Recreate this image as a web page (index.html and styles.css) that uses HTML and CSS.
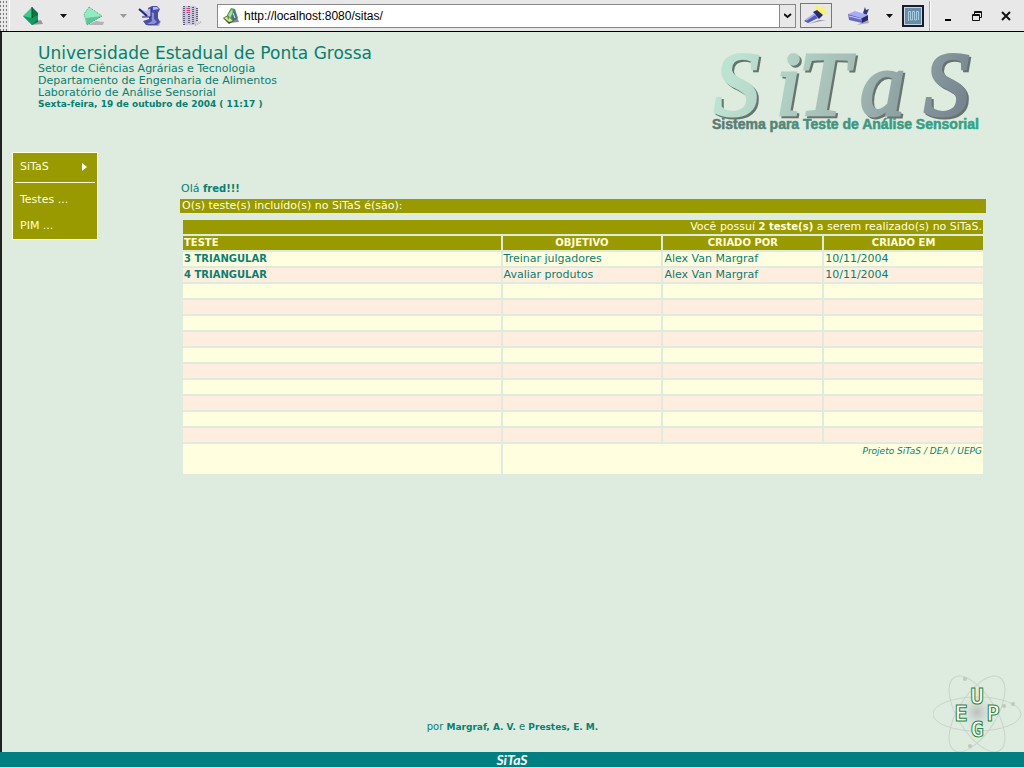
FILE: index.html
```html
<!DOCTYPE html>
<html lang="pt-BR">
<head>
<meta charset="utf-8">
<title>SiTaS</title>
<link rel="stylesheet" href="styles.css">
</head>
<body>
<nav class="toolbar" aria-label="Navegador">
  <span class="grip"></span>
  <button class="tool wide" aria-label="Voltar"><svg width="22" height="22" viewBox="0 0 22 22"><path d="M9 20l12-1-2-4-6 1z" fill="#999"/><path d="M1 11L10 2v18z" fill="#3fc88c"/><path d="M10 2l6 6v9l-6 3z" fill="#087744"/><path d="M1 11l9 2 6-3v4l-6 6z" fill="#129a5f"/><path d="M10 2v11" stroke="#054e2c"/></svg></button>
  <button class="tool caret" aria-label="Histórico anterior"><svg width="8" height="4"><path d="M0 0h7L3.500 4z" fill="#111"/></svg></button>
  <button class="tool forward" aria-label="Avançar"><svg width="22" height="22" viewBox="0 0 22 22"><path d="M5 20l15 0 1-3-8-1z" fill="#b4b4b4"/><path d="M6 2l13 9L4 20 1 9z" fill="#93ebc1"/><path d="M3 13l16-2L4 20z" fill="#5cc795"/><path d="M6 2l13 9L4 20 1 9z" fill="none" stroke="#4aa57b" stroke-dasharray="1 1"/></svg></button>
  <button class="tool caret" aria-label="Próximo histórico"><svg width="8" height="4"><path d="M0 0h7L3.500 4z" fill="#999"/></svg></button>
  <button class="tool reload" aria-label="Recarregar"><svg width="24" height="22" viewBox="0 0 24 22"><path d="M9 21h12l2-5-6-1z" fill="#aaa"/><path d="M10 3l4-2h5l3 3-2 4v5l2 4-3 3H8l-3-4 6-2V9z" fill="#4a4fa6"/><path d="M15 2h4l2 2-6 1z" fill="#b6b9f5"/><path d="M13 7l3 1v6l3 3-3 2H9l5-3z" fill="#8b90de"/><path d="M1 4l7 2 5-3v9H4l3-3z" fill="#b8baf2"/><path d="M1 4l8 7" stroke="#23276f" stroke-width="2"/><path d="M13 3v9H4" fill="none" stroke="#23276f" stroke-width="1"/></svg></button>
  <button class="tool wide" aria-label="Parar"><svg width="22" height="22" viewBox="0 0 22 22"><path d="M3 1h12l3 3v12l-4 4H5l-3-4V4z" fill="#cbc7d8"/><path d="M4 1v19M9 1v18M13 2v18M17 3v13" stroke="#5f5a79" stroke-width="2" stroke-dasharray="1 1"/><path d="M8 3v6" stroke="#db4181" stroke-width="3" stroke-dasharray="1 1"/><path d="M15 20l6-3" stroke="#aaa" stroke-width="2" stroke-dasharray="1 1"/></svg></button>
  <form class="address">
    <svg width="18" height="18" viewBox="0 0 18 18" aria-hidden="true"><path d="M6 16l11-1-2-5z" fill="#888"/><path d="M1 11l5-3 6 6-5 3z" fill="#314c3c"/><path d="M2 11l4-2 5 5-4 1z" fill="#d7eb79"/><path d="M5 8l4-7 4 1 3 9-5 3-3-4-2 3z" fill="#4b9349"/><path d="M6 8l4-6 1 3-3 6z" fill="#a6e18f"/><path d="M11 4l2 1 2 7-4 2-1-4z" fill="#4769a5"/><path d="M11 6l2 5" stroke="#eef3a5"/></svg>
    <input aria-label="Endereço" value="http://localhost:8080/sitas/">
    <button type="button" class="drop" aria-label="Abrir lista de endereços"><svg width="8" height="6"><path d="M0 1l3.500 3L7 1" fill="none" stroke="#111" stroke-width="2"/></svg></button>
  </form>
  <button class="go" aria-label="Ir"><svg width="28" height="22" viewBox="0 0 28 22"><path d="M14 1l5 3 5-2-2 4 4 3-5 2-8-4z" fill="#f7f36c"/><path d="M6 20l18-4-7 0z" fill="#9a9aab"/><path d="M2 17l10-7 4 4-10 5z" fill="#5659ba"/><path d="M11 8l4-2 6 5-4 4z" fill="#262a72"/><path d="M4 16l9-6" stroke="#aaaefa" stroke-width="2"/></svg></button>
  <button class="tool print" aria-label="Imprimir"><svg width="24" height="22" viewBox="0 0 24 22"><path d="M10 20l12-2-1-4z" fill="#aaa"/><path d="M9 8l1-4 9 2-2 6z" fill="#e8e8ff"/><path d="M16 8l2-6 1 3 3-1-3 7z" fill="#343a79"/><path d="M1 9l7-3 13 4-6 3z" fill="#a8acf0"/><path d="M1 9l14 4v5L2 15z" fill="#676bc5"/><path d="M15 13l6-3v5l-6 3z" fill="#272b70"/><path d="M2 11l12 3" stroke="#c8caff"/></svg></button>
  <button class="tool caret" aria-label="Opções de impressão"><svg width="8" height="4"><path d="M0 0h7L3.500 4z" fill="#111"/></svg></button>
  <button class="full" aria-label="Tela cheia"><svg width="16" height="16"><path d="M0 0h16v16H0z" fill="#688da9"/><path d="M3.500 13V3.500h2V12h2V3.500h2V12h2V3.500h2V12" fill="none" stroke="#a9cbe0"/></svg></button>
  <span class="divider"></span>
  <button class="tool window" aria-label="Minimizar"><svg width="12" height="12"><path d="M3 9h6v2H3z"/></svg></button>
  <button class="tool window" aria-label="Restaurar"><svg width="12" height="12"><path d="M3.500 4V1.500h7v6H8M3 2.500h8M1.500 4.500h7v6h-7zM1 5.500h8" fill="none" stroke="#111"/></svg></button>
  <button class="tool window" aria-label="Fechar"><svg width="12" height="12"><path d="M2 2l8 8M10 2l-8 8" stroke="#111" stroke-width="2"/></svg></button>
</nav>

<div class="page">
  <header class="header">
    <div class="identity">
      <h1>Universidade Estadual de Ponta Grossa</h1>
      <p>Setor de Ciências Agrárias e Tecnologia</p>
      <p>Departamento de Engenharia de Alimentos</p>
      <p>Laboratório de Análise Sensorial</p>
      <p class="date">Sexta-feira, 19 de outubro de 2004 ( 11:17 )</p>
    </div>
    <svg class="brand" width="280" height="90" viewBox="0 0 280 90" role="img" aria-label="SiTaS, Sistema para Teste de Análise Sensorial">
      <defs>
        <linearGradient id="metal" gradientUnits="userSpaceOnUse" x1="40" y1="0" x2="250" y2="80"><stop offset="0" stop-color="#bce2d1"/><stop offset="0.500" stop-color="#a4bbb5"/><stop offset="1" stop-color="#788590"/></linearGradient>
        <linearGradient id="caption" x1="0" x2="1" y1="0" y2="0"><stop offset="0" stop-color="#5d7770"/><stop offset="0.400" stop-color="#44917f"/><stop offset="1" stop-color="#2ea486"/></linearGradient>
      </defs>
      <text class="wordmark" x="10 72 95 156 220" y="68">SiTaS</text>
      <text class="tagline" x="8" y="82">Sistema para Teste de Análise Sensorial</text>
    </svg>
  </header>

  <div class="body">
    <nav class="menu" aria-label="Menu">
      <a href="#sitas">SiTaS <svg width="6" height="8"><path d="M0 0l5 4-5 4z" fill="#fff"/></svg></a>
      <hr>
      <a href="#testes">Testes ...</a>
      <a href="#pim">PIM ...</a>
    </nav>
    <main class="content">
      <p class="greeting">Olá <b>fred!!!</b></p>
      <h2>O(s) teste(s) incluído(s) no SiTaS é(são):</h2>
      <table>
        <colgroup><col class="test"><col><col><col></colgroup>
        <thead>
          <tr><td class="summary" colspan="4">Você possuí <b>2 teste(s)</b> a serem realizado(s) no SiTaS.</td></tr>
          <tr><th class="left">TESTE</th><th>OBJETIVO</th><th>CRIADO POR</th><th>CRIADO EM</th></tr>
        </thead>
        <tbody>
          <tr><td><b>3 TRIANGULAR</b></td><td>Treinar julgadores</td><td>Alex Van Margraf</td><td>10/11/2004</td></tr>
          <tr><td><b>4 TRIANGULAR</b></td><td>Avaliar produtos</td><td>Alex Van Margraf</td><td>10/11/2004</td></tr>
          <tr><td></td><td></td><td></td><td></td></tr>
          <tr><td></td><td></td><td></td><td></td></tr>
          <tr><td></td><td></td><td></td><td></td></tr>
          <tr><td></td><td></td><td></td><td></td></tr>
          <tr><td></td><td></td><td></td><td></td></tr>
          <tr><td></td><td></td><td></td><td></td></tr>
          <tr><td></td><td></td><td></td><td></td></tr>
          <tr><td></td><td></td><td></td><td></td></tr>
          <tr><td></td><td></td><td></td><td></td></tr>
          <tr><td></td><td></td><td></td><td></td></tr>
        </tbody>
        <tfoot><tr><td></td><td class="project" colspan="3">Projeto SiTaS / DEA / UEPG</td></tr></tfoot>
      </table>
    </main>
  </div>

  <div class="credits">
    <p>por <b>Margraf, A. V.</b> e <b>Prestes, E. M.</b></p>
    <svg class="atom" width="90" height="78" viewBox="0 0 90 78" role="img" aria-label="UEPG">
      <defs><radialGradient id="core"><stop offset="0" stop-color="#b9bfb9"/><stop offset="1" stop-color="#deebdf" stop-opacity="0"/></radialGradient></defs>
      <g fill="none" stroke="#c9d4ca">
        <ellipse cx="44" cy="40" rx="44" ry="17"/>
        <ellipse cx="44" cy="40" rx="43" ry="19" transform="rotate(58 44 40)"/>
        <ellipse cx="44" cy="40" rx="43" ry="19" transform="rotate(-58 44 40)"/>
      </g>
      <circle cx="44" cy="38" r="20" fill="url(#core)"/>
      <g fill="#bfc8c0"><circle cx="32" cy="5" r="2"/><circle cx="80" cy="30" r="2"/><circle cx="71" cy="32" r="2"/><circle cx="37" cy="72" r="2"/></g>
      <g class="letters"><text x="44" y="30">U</text><text x="28" y="47">E</text><text x="60" y="47">P</text><text x="44" y="63">G</text></g>
    </svg>
  </div>
</div>
<footer class="footer">SiTaS</footer>
</body>
</html>
```
FILE: styles.css
```css
* { box-sizing: border-box; }

body {
  margin: 0;
  min-height: 100vh;
  display: flex;
  flex-direction: column;
  background: #deebdf;
  color: #087f70;
  font: 11px/12px "DejaVu Sans", Verdana, sans-serif;
}

p, h1, h2 { margin: 0; font-weight: normal; }
b { font-size: 10px; }
button { padding: 0; font: inherit; }

.toolbar {
  display: flex;
  align-items: center;
  height: 32px;
  padding-right: 4px;
  background: #e8e8e8;
  border-bottom: 1px solid #000;
}
.tool {
  display: flex;
  align-items: center;
  justify-content: center;
  flex: none;
  height: 28px;
  border: 0;
  background: none;
}
.wide { width: 46px; }
.caret { width: 16px; }
.forward { width: 44px; }
.reload { width: 36px; }
.print { width: 46px; margin-left: 4px; }
.window { width: 29px; }
.grip {
  width: 10px;
  height: 31px;
  border-right: 1px solid #fff;
  background: radial-gradient(circle, #777 1px, transparent 1px) 2px 0 / 3px 4px;
}
.address {
  display: flex;
  align-items: center;
  flex: 1;
  min-width: 0;
  height: 24px;
  margin-left: 3px;
  padding-left: 4px;
  border: 1px solid #888;
  background: #fff;
}
.address input {
  flex: 1;
  min-width: 0;
  height: 20px;
  padding: 0 4px;
  border: 0;
  outline: 0;
  background: none;
  color: #000;
  font: 12px "Liberation Sans", Arial, sans-serif;
}
.drop {
  width: 16px;
  height: 22px;
  border: 0;
  border-left: 1px solid #888;
  background: #e8e8e8;
}
.go {
  width: 32px;
  height: 25px;
  margin-left: 4px;
  border: 1px solid #777;
  background: #e8e8e8;
}
.full {
  display: flex;
  align-items: center;
  justify-content: center;
  width: 22px;
  height: 22px;
  margin-left: 4px;
  border: 2px solid #171d2a;
  background: #cbd3dc;
}
.divider {
  width: 2px;
  height: 30px;
  margin: 0 2px 0 5px;
  border-left: 1px solid #aaa;
  background: #fff;
}

.page {
  flex: 1;
  display: flex;
  flex-direction: column;
  border-left: 2px solid #222;
}
.header {
  display: flex;
  justify-content: space-between;
  height: 102px;
  padding: 12px 40px 0 36px;
}
.header h1 { font-size: 17px; line-height: 19px; }
.header .date { font-size: 9px; font-weight: bold; line-height: 11px; }
.brand { flex: none; margin-top: 3px; }
.wordmark {
  fill: url(#metal);
  stroke: url(#metal);
  stroke-width: 3px;
  font: italic 90px "Liberation Serif", "Times New Roman", serif;
  filter: drop-shadow(2px 2px 0 #67736e);
}
.tagline {
  fill: url(#caption);
  stroke: url(#caption);
  stroke-width: 0.5px;
  font: bold 14px "Liberation Sans", Arial, sans-serif;
}

.body {
  display: flex;
  align-items: flex-start;
  padding: 18px 38px 0 10px;
}
.menu {
  flex: none;
  width: 86px;
  padding: 1px 2px 0;
  border: 1px solid #ffffdf;
  background: #999900;
}
.menu a {
  display: flex;
  align-items: center;
  justify-content: space-between;
  height: 26px;
  padding: 0 7px 0 5px;
  color: #ffffdf;
  text-decoration: none;
}
.menu hr {
  height: 1px;
  margin: 2px 0 4px;
  border: 0;
  background: #ffffdf;
}
.content {
  flex: 1;
  min-width: 0;
  margin: 31px 0 0 82px;
}
.greeting { padding-left: 1px; }
.content h2 {
  margin-top: 4px;
  padding-left: 2px;
  background: #999900;
  color: #ffffdf;
  font-size: 11px;
  line-height: 14px;
}
table {
  width: calc(100% - 2px);
  margin: 5px 1px 0;
  border-spacing: 2px;
  table-layout: fixed;
}
.test { width: 40%; }
td, th {
  height: 14px;
  padding: 0 1px;
  line-height: 14px;
  text-align: left;
}
th, .summary { background: #999900; color: #ffffdf; }
th { font-size: 10px; text-align: center; }
th.left { text-align: left; }
.summary { text-align: right; }
tbody td, tfoot td { background: #ffffdf; }
tbody tr:nth-child(even) td { background: #ffeedd; }
tfoot td { height: 30px; vertical-align: top; }
tfoot .project { text-align: right; font-size: 9px; font-style: italic; }

.credits {
  display: grid;
  grid-template-columns: 1fr auto 1fr;
  align-items: center;
  margin-top: auto;
  padding-right: 1px;
}
.credits p { grid-column: 2; padding-top: 28px; font-size: 10px; }
.credits b { font-size: 9px; }
.atom { display: block; justify-self: end; }
.letters {
  fill: #fff;
  stroke: #28853b;
  stroke-width: 1px;
  text-anchor: middle;
  font: bold 22px "DejaVu Sans Mono", monospace;
}
.footer {
  height: 16px;
  border-bottom: 1px solid #c4ecee;
  background: #008080;
  color: #fff;
  font: italic bold 14px/15px Lato, sans-serif;
  text-align: center;
}
```
